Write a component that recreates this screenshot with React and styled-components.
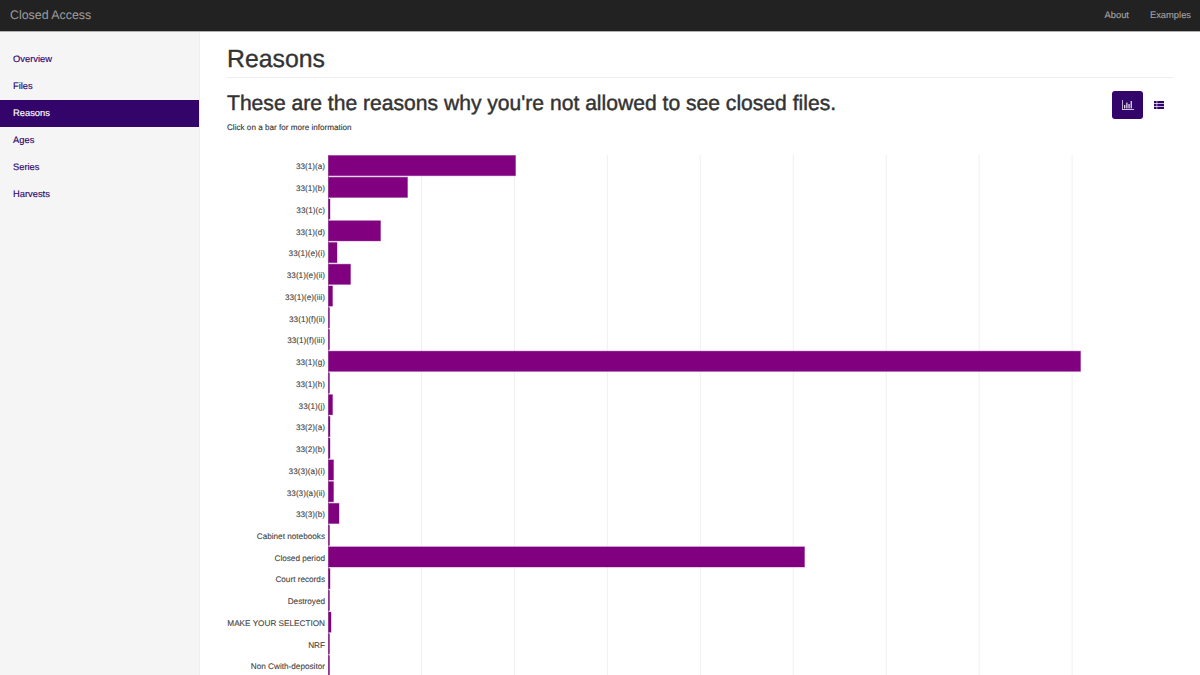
import React from 'react';
import styled, {createGlobalStyle} from 'styled-components';

const GlobalStyle = createGlobalStyle`
    html, body {
        margin:0;
        padding:0;
        background:#fff;
        font-family:"Liberation Sans", Arial, sans-serif;
        color:#333;
        text-rendering:geometricPrecision;
    }
`;

const Page = styled.div`
    width:1200px;
    height:675px;
    overflow:hidden;
    display:flex;
    flex-direction:column;
`;

const NavBar = styled.header`
    height:31px;
    box-sizing:content-box;
    flex:none;
    background:#222;
    border-bottom:1px solid #b0b0b0;
    display:flex;
    align-items:center;
    justify-content:space-between;
    padding:0 9px 0 10px;
`;

const Brand = styled.a`
    font-size:12.4px;
    line-height:14px;
    margin-top:-2px;
    color:#9d9d9d;
`;

const NavLinks = styled.nav`
    display:flex;
    gap:21px;
    margin-top:-2px;
`;

const NavLink = styled.a`
    font-size:9.35px;
    color:#a4a4a4;
    -webkit-text-stroke:0.1px #a4a4a4;
`;

const Body = styled.div`
    flex:1;
    min-height:0;
    display:flex;
`;

const Sidebar = styled.aside`
    width:199px;
    flex:none;
    box-sizing:content-box;
    background:#f5f5f5;
    border-right:1px solid #eee;
    padding-top:14px;
`;

const SideItem = styled.a`
    display:flex;
    align-items:center;
    height:27px;
    box-sizing:border-box;
    padding:0 0 1px 13px;
    font-size:9.35px;
    color:${p => (p.$active ? '#fff' : '#33056b')};
    background:${p => (p.$active ? '#33056b' : 'transparent')};
    -webkit-text-stroke:0.15px ${p => (p.$active ? '#fff' : '#33056b')};
`;

const Main = styled.main`
    flex:1;
    min-width:0;
    padding:0 27px;
`;

const PageTitle = styled.h1`
    margin:0;
    height:46px;
    padding-top:10px;
    box-sizing:border-box;
    display:flex;
    align-items:center;
    font-size:24.8px;
    font-weight:400;
    color:#333;
    border-bottom:1px solid #eee;
    -webkit-text-stroke:0.35px #333;
`;

const HeadRow = styled.div`
    display:flex;
    justify-content:space-between;
    align-items:flex-start;
    margin-top:13px;
`;

const Heading = styled.h2`
    margin:0;
    font-size:21.1px;
    line-height:25px;
    font-weight:400;
    color:#333;
    -webkit-text-stroke:0.45px #333;
`;

const Hint = styled.p`
    margin:6px 0 0;
    font-size:8.15px;
    line-height:12px;
    color:#333;
    -webkit-text-stroke:0.1px #333;
`;

const Toggle = styled.div`
    display:flex;
    margin-right:-1px;
`;

const ToggleButton = styled.button`
    width:31px;
    height:28px;
    padding:0;
    border:0;
    border-radius:3px;
    display:flex;
    align-items:center;
    justify-content:center;
    background:${p => (p.$active ? '#33056b' : 'transparent')};
    color:${p => (p.$active ? '#fff' : '#33056b')};
`;

const Chart = styled.svg`
    display:block;
    margin:21px 0 0 -27px;
`;

const ChartLabel = styled.text`
    font-family:"Liberation Sans", Arial, sans-serif;
    font-size:8.2px;
    fill:#444;
    stroke:#444;
    stroke-width:0.1px;
    text-anchor:end;
`;

const BarChartIcon = () => (
    <svg width="12" height="10" viewBox="0 0 12 10" fill="currentColor" opacity="0.85">
        <rect x="0" y="0" width="0.8" height="9.2" />
        <rect x="0" y="9" width="12" height="0.9" />
        <rect x="2" y="5" width="1.3" height="3.4" />
        <rect x="4.2" y="2.6" width="1.3" height="5.8" />
        <rect x="6.4" y="4" width="1.3" height="4.4" />
        <rect x="8.6" y="1" width="1.3" height="7.4" />
    </svg>
);

const ListIcon = () => (
    <svg width="10" height="8" viewBox="0 0 10 8" fill="currentColor">
        <rect x="0" y="0" width="2.6" height="2.2" />
        <rect x="3.2" y="0" width="6.8" height="2.2" />
        <rect x="0" y="2.9" width="2.6" height="2.2" />
        <rect x="3.2" y="2.9" width="6.8" height="2.2" />
        <rect x="0" y="5.8" width="2.6" height="2.2" />
        <rect x="3.2" y="5.8" width="6.8" height="2.2" />
    </svg>
);

const menu = ['Overview', 'Files', 'Reasons', 'Ages', 'Series', 'Harvests'];

const reasons = [
    ['33(1)(a)', 187],
    ['33(1)(b)', 79],
    ['33(1)(c)', 1.5],
    ['33(1)(d)', 52],
    ['33(1)(e)(i)', 8.5],
    ['33(1)(e)(ii)', 22],
    ['33(1)(e)(iii)', 4],
    ['33(1)(f)(ii)', 1],
    ['33(1)(f)(iii)', 1],
    ['33(1)(g)', 752],
    ['33(1)(h)', 1],
    ['33(1)(j)', 4],
    ['33(2)(a)', 1.5],
    ['33(2)(b)', 1.5],
    ['33(3)(a)(i)', 5],
    ['33(3)(a)(ii)', 5],
    ['33(3)(b)', 10.5],
    ['Cabinet notebooks', 1],
    ['Closed period', 476],
    ['Court records', 1.5],
    ['Destroyed', 1],
    ['MAKE YOUR SELECTION', 2.5],
    ['NRF', 1],
    ['Non Cwith-depositor', 1],
];

const AXIS = 328.5;
const PITCH = 21.74;

/* viewBox starts at the page column so x values match the screenshot */
const ReasonsChart = () => (
    <Chart width="1000" height="545" viewBox="200 155 1000 545">
        {[1, 2, 3, 4, 5, 6, 7, 8].map(i => (
            <line key={i} x1={AXIS + i * 92.95} x2={AXIS + i * 92.95} y1="155" y2="700" stroke="#f0f0f0" strokeWidth="1" />
        ))}
        <line x1={AXIS} x2={AXIS} y1="155" y2="700" stroke="#b4a4b4" strokeWidth="1" />
        {reasons.map(([label, w], i) => (
            <g key={label}>
                <rect
                    x={AXIS}
                    y={155.5 + i * PITCH}
                    width={w}
                    height="20.2"
                    fill="#800080"
                    stroke="rgba(128,0,128,0.35)"
                    strokeWidth="1"
                />
                <ChartLabel x="325" y={169.4 + i * PITCH}>{label}</ChartLabel>
            </g>
        ))}
    </Chart>
);

const App = () => (
    <Page>
        <GlobalStyle />
        <NavBar>
            <Brand>Closed Access</Brand>
            <NavLinks>
                <NavLink>About</NavLink>
                <NavLink>Examples</NavLink>
            </NavLinks>
        </NavBar>
        <Body>
            <Sidebar>
                {menu.map(m => (
                    <SideItem key={m} $active={m === 'Reasons'}>{m}</SideItem>
                ))}
            </Sidebar>
            <Main>
                <PageTitle>Reasons</PageTitle>
                <HeadRow>
                    <div>
                        <Heading>These are the reasons why you're not allowed to see closed files.</Heading>
                        <Hint>Click on a bar for more information</Hint>
                    </div>
                    <Toggle>
                        <ToggleButton $active><BarChartIcon /></ToggleButton>
                        <ToggleButton><ListIcon /></ToggleButton>
                    </Toggle>
                </HeadRow>
                <ReasonsChart />
            </Main>
        </Body>
    </Page>
);

export default App;
